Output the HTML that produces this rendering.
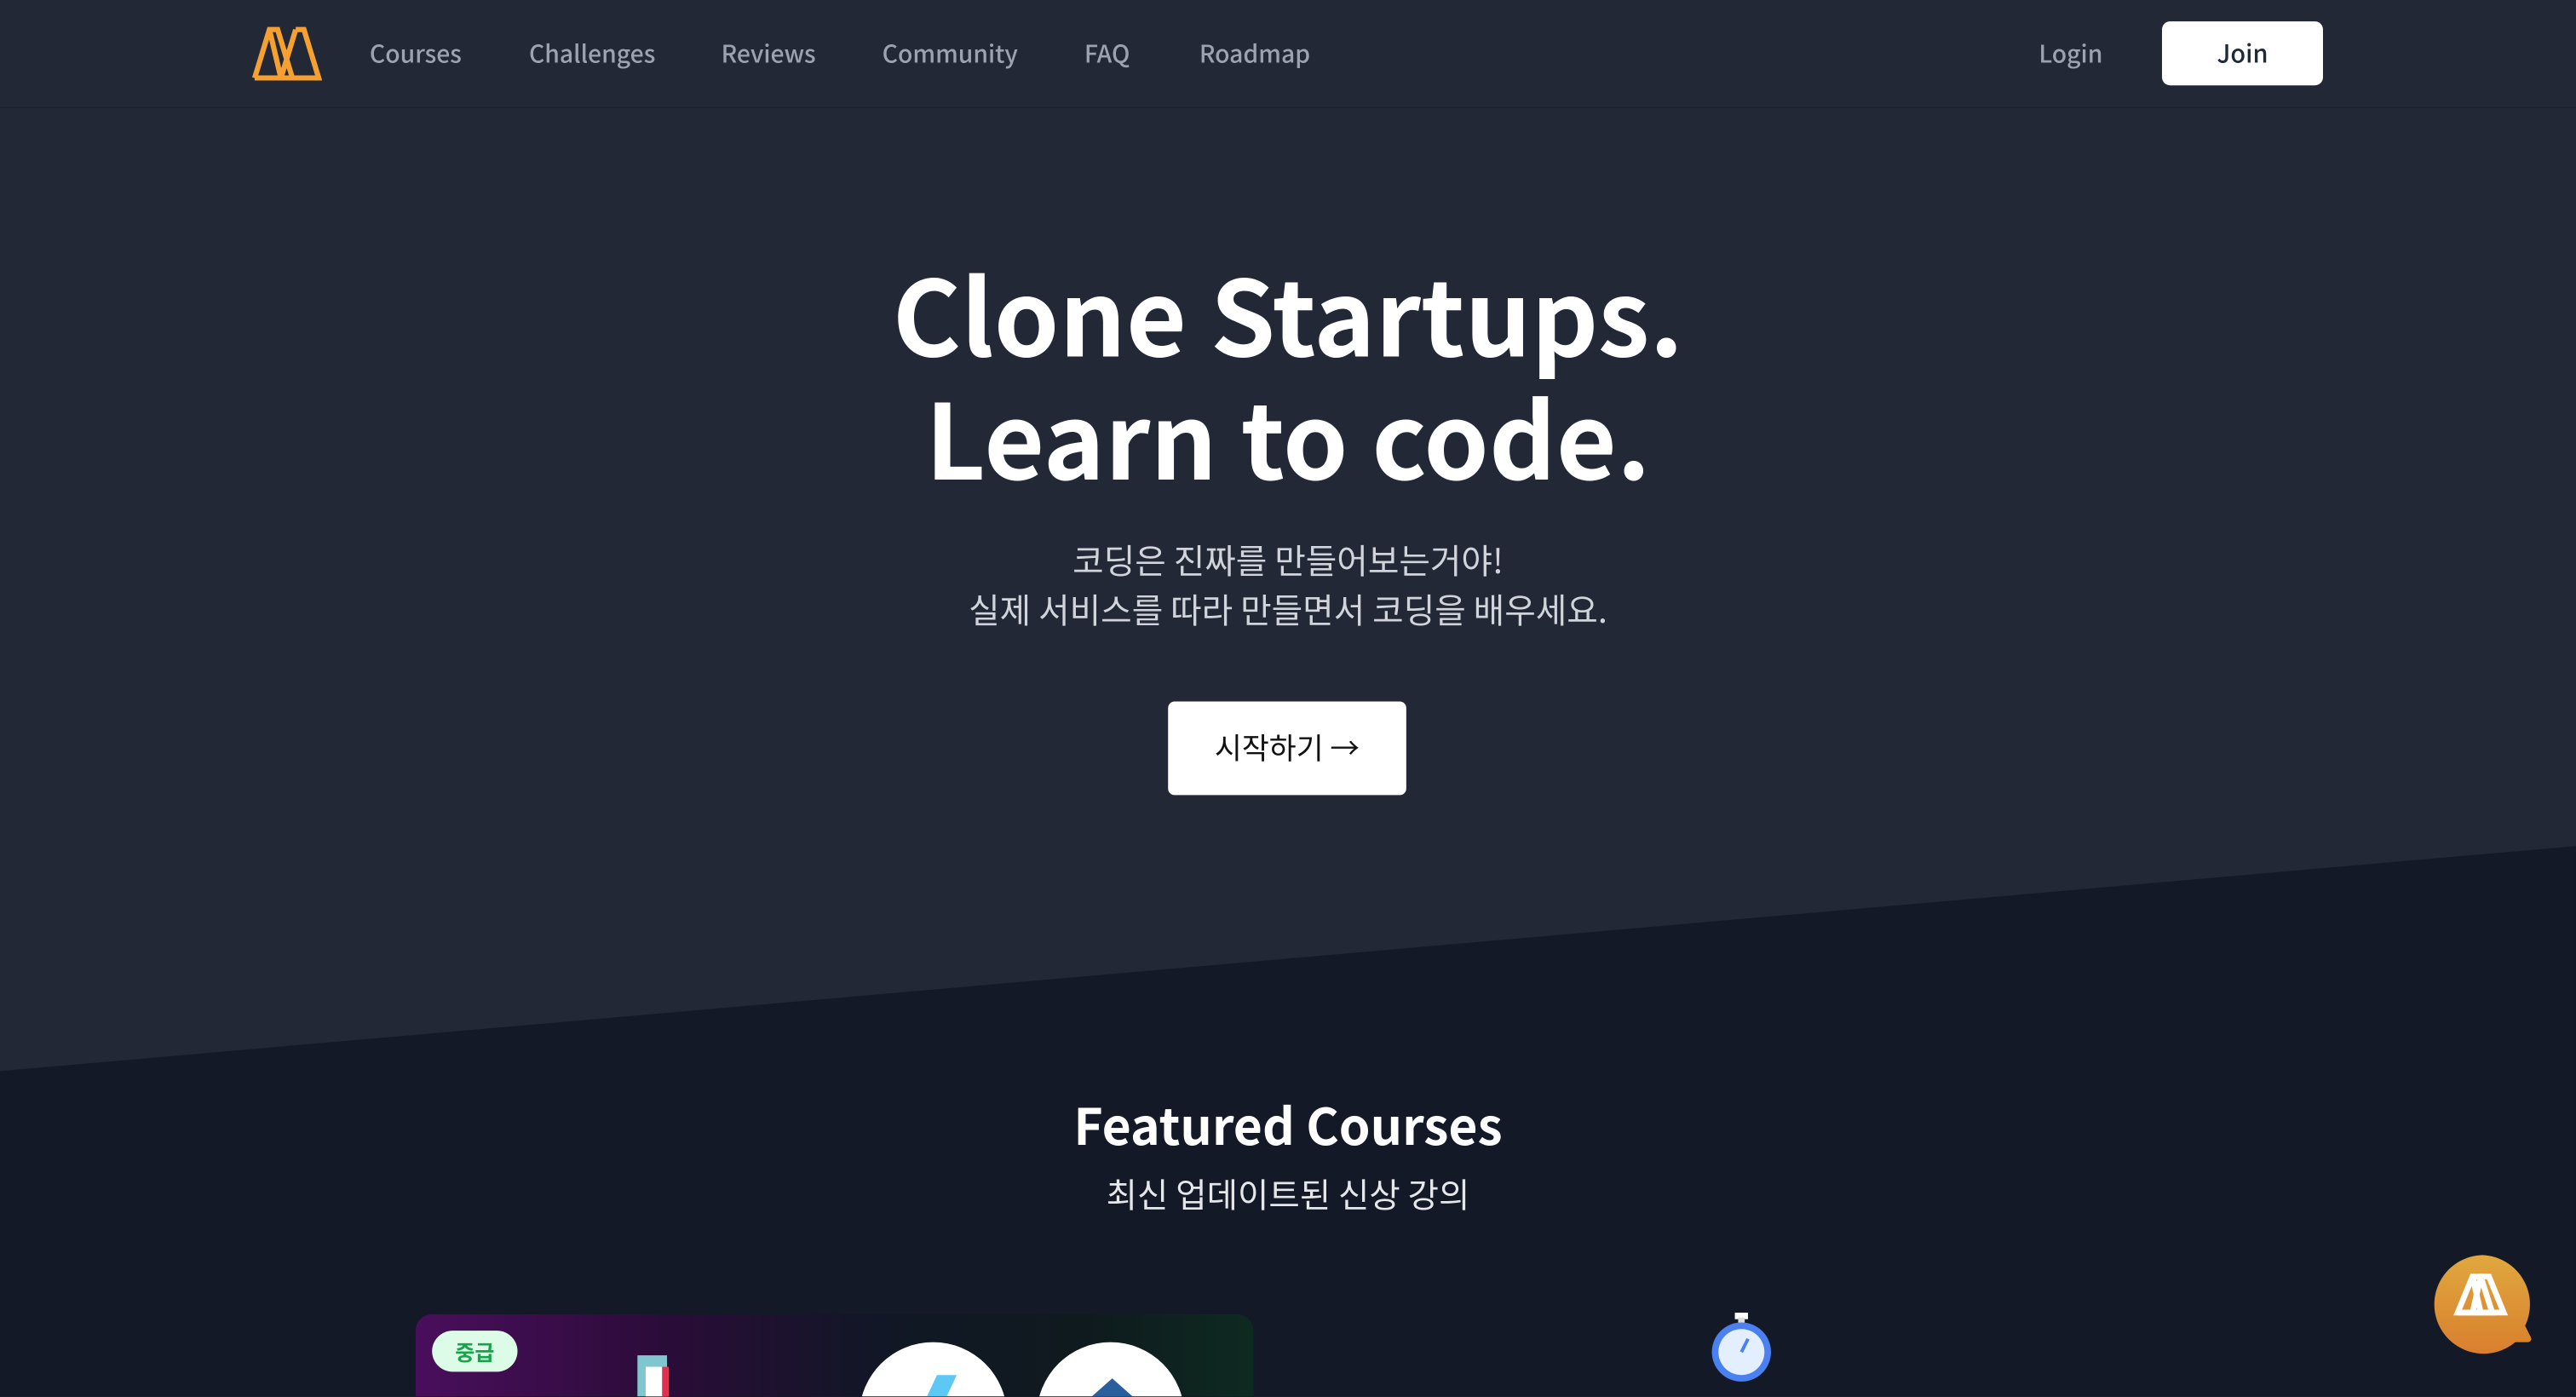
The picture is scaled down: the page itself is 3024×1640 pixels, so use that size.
<!DOCTYPE html>
<html><head><meta charset="utf-8"><style>
*{margin:0;padding:0;box-sizing:border-box}
html,body{width:3024px;height:1640px;overflow:hidden;background:#131926}
#w{position:absolute;left:0;top:0;width:1568px;height:850px;transform:scale(1.928571);transform-origin:0 0;background:#222836;font-family:"Noto Sans CJK KR","Liberation Sans",sans-serif;overflow:hidden}
.low{position:absolute;left:0;top:0;width:1568px;height:850px;background:#131926;clip-path:polygon(0 652px,1568px 515px,1568px 850px,0 850px)}
nav{position:absolute;left:0;top:0;width:1568px;height:66px;border-bottom:1px solid #1d2230}
nav a{position:absolute;top:22px;font-size:14.7px;line-height:22px;color:#9ca3af;font-weight:500}
.join{position:absolute;left:1316px;top:13px;width:98px;height:39px;background:#fff;border-radius:5px;color:#1f2937;font-size:15px;font-weight:500;text-align:center;line-height:39px}
h1{position:absolute;left:0;width:1568px;top:153px;text-align:center;color:#fff;font-size:63.5px;line-height:75px;font-weight:700;letter-spacing:0}
.sub{position:absolute;left:0;width:1568px;top:325px;text-align:center;color:#d1d5db;font-size:20.6px;line-height:30px}
.btn{position:absolute;left:711px;top:427px;width:145px;height:57px;background:#fff;border-radius:4px;color:#111;font-size:18px;line-height:57px;text-align:center}
h2{position:absolute;left:0;width:1568px;top:663px;text-align:center;color:#fff;font-size:30.5px;line-height:42px;font-weight:600}
.s2{position:absolute;left:0;width:1568px;top:711px;text-align:center;color:#e5e7eb;font-size:20.5px;line-height:30px}
.card{position:absolute;left:253px;top:800px;width:510px;height:80px;border-radius:10px;background:linear-gradient(90deg,#4a0e5c 0%,#2a0c38 30%,#111726 55%,#0f1a1e 80%,#0d2a20 100%);overflow:hidden}
.badge{position:absolute;left:10px;top:10px;width:52px;height:25px;border-radius:13px;background:#dcfce7;color:#16a34a;font-size:13px;line-height:25px;text-align:center;font-weight:600}
.circ{position:absolute;top:17px;width:90px;height:90px;border-radius:50%;background:#fff}
</style></head><body><div id="w">
<div class="low"></div>
<nav>
<svg style="position:absolute;left:153px;top:16px" width="43" height="33" viewBox="0 0 43 33"><path d="M2 31.5 L11 2 H16 L25 31.5 M11 2 L18 31.5 M27 2 L18 31.5 M27 2 H32 L41 31.5 H2" fill="none" stroke="#f5a030" stroke-width="3.2"/></svg>
<a style="left:225px">Courses</a><a style="left:322px">Challenges</a><a style="left:439px">Reviews</a><a style="left:537px">Community</a><a style="left:660px">FAQ</a><a style="left:730px">Roadmap</a>
<a style="left:1241px">Login</a>
<div class="join">Join</div>
</nav>
<h1>Clone Startups.<br>Learn to code.</h1>
<div class="sub">코딩은 진짜를 만들어보는거야!<br>실제 서비스를 따라 만들면서 코딩을 배우세요.</div>
<div class="btn">시작하기 →</div>
<h2>Featured Courses</h2>
<div class="s2">최신 업데이트된 신상 강의</div>
<div class="card"><div class="badge">중급</div>
<div style="position:absolute;left:135px;top:25px;width:18px;height:40px;background:#7fc6cf"></div>
<div style="position:absolute;left:140px;top:32px;width:14px;height:40px;background:#fff;border-right:4px solid #e03050"></div>
<div class="circ" style="left:270px"><div style="position:absolute;left:38px;top:20px;width:12px;height:40px;background:#5ec8f5;transform:skewX(-25deg)"></div></div>
<div class="circ" style="left:378px"><div style="position:absolute;left:28px;top:22px;width:36px;height:40px;background:#2a5f9e;clip-path:polygon(50% 0,100% 40%,100% 100%,0 100%,0 40%)"></div></div>
</div>
<svg style="position:absolute;left:1040px;top:799px" width="40" height="44" viewBox="0 0 40 44"><rect x="16" y="0" width="8" height="4" fill="#fff"/><rect x="18" y="3" width="4" height="5" fill="#ddd"/><circle cx="20" cy="24" r="18" fill="#4a80f0"/><circle cx="20" cy="24" r="14" fill="#e3efff"/><path d="M20 24 L24 16" stroke="#4a80f0" stroke-width="2"/></svg>
<svg style="position:absolute;left:1479px;top:763px" width="66" height="64" viewBox="0 0 66 64"><defs><linearGradient id="g" x1="0" y1="0" x2="0" y2="1"><stop offset="0" stop-color="#e0a83e"/><stop offset="1" stop-color="#d97f2e"/></linearGradient></defs><path d="M32 1 A30 30 0 1 0 52 54 L60 54 Q63 53 61 50 L58 44 A30 30 0 0 0 32 1Z" fill="url(#g)"/><path d="M17 36 L26 14 H31 L38 36 Z M26 14 L31 36 M31 14 L26 36" fill="none" stroke="#fff" stroke-width="3.5"/><path d="M30 14 H36 L45 36 H17" fill="none" stroke="#fff" stroke-width="3.5"/></svg>
</div></body></html>
